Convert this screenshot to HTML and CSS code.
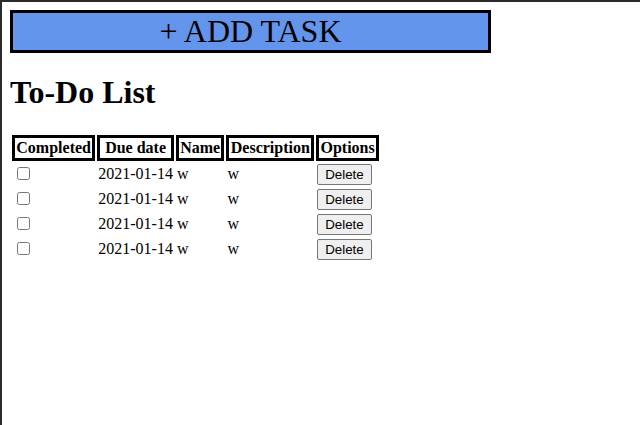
FILE: index.html
```html
<!DOCTYPE html>
<html>
<head>
<meta charset="utf-8">
<title>To-Do List</title>
<link rel="stylesheet" href="styles.css">
</head>
<body>
<div class="add-task">+ ADD TASK</div>
<h1 class="title">To-Do List</h1>
<table class="tasks">
  <thead>
    <tr>
      <th>Completed</th>
      <th>Due date</th>
      <th>Name</th>
      <th>Description</th>
      <th>Options</th>
    </tr>
  </thead>
  <tbody>
    <tr>
      <td><input type="checkbox"></td>
      <td>2021-01-14</td>
      <td>w</td>
      <td>w</td>
      <td><button class="delete">Delete</button></td>
    </tr>
    <tr>
      <td><input type="checkbox"></td>
      <td>2021-01-14</td>
      <td>w</td>
      <td>w</td>
      <td><button class="delete">Delete</button></td>
    </tr>
    <tr>
      <td><input type="checkbox"></td>
      <td>2021-01-14</td>
      <td>w</td>
      <td>w</td>
      <td><button class="delete">Delete</button></td>
    </tr>
    <tr>
      <td><input type="checkbox"></td>
      <td>2021-01-14</td>
      <td>w</td>
      <td>w</td>
      <td><button class="delete">Delete</button></td>
    </tr>
  </tbody>
</table>
</body>
</html>
```

FILE: styles.css
```css
html {
  border-top: 2px solid #2b2b2b;
  border-left: 2px solid #2b2b2b;
  min-height: 100%;
  box-sizing: border-box;
  background: #fff;
}

body {
  margin: 8px;
  font-family: "Liberation Serif", "Times New Roman", serif;
  font-size: 16px;
  color: #000;
}

.add-task {
  box-sizing: border-box;
  width: 481px;
  border: 3px solid #000;
  background: #6495ed;
  font-size: 32px;
  text-align: center;
  cursor: pointer;
}

.title {
  font-size: 32px;
  font-weight: bold;
  margin: 21.44px 0;
}

.tasks {
  border-spacing: 2px;
}

.tasks th {
  border: 3px solid #000;
  padding: 1px 1.3px;
  font-weight: bold;
}

.tasks td {
  padding: 1px;
  text-align: left;
}

.tasks input[type="checkbox"] {
  margin: 3px 3px 3px 4px;
  width: 13px;
  height: 13px;
}

.delete {
  font-family: "Liberation Sans", Arial, sans-serif;
  font-size: 13.333px;
  padding: 2px 7px;
  border: 1px solid #767676;
  border-radius: 2px;
  background: #efefef;
  color: #000;
  margin: 0;
}
```
